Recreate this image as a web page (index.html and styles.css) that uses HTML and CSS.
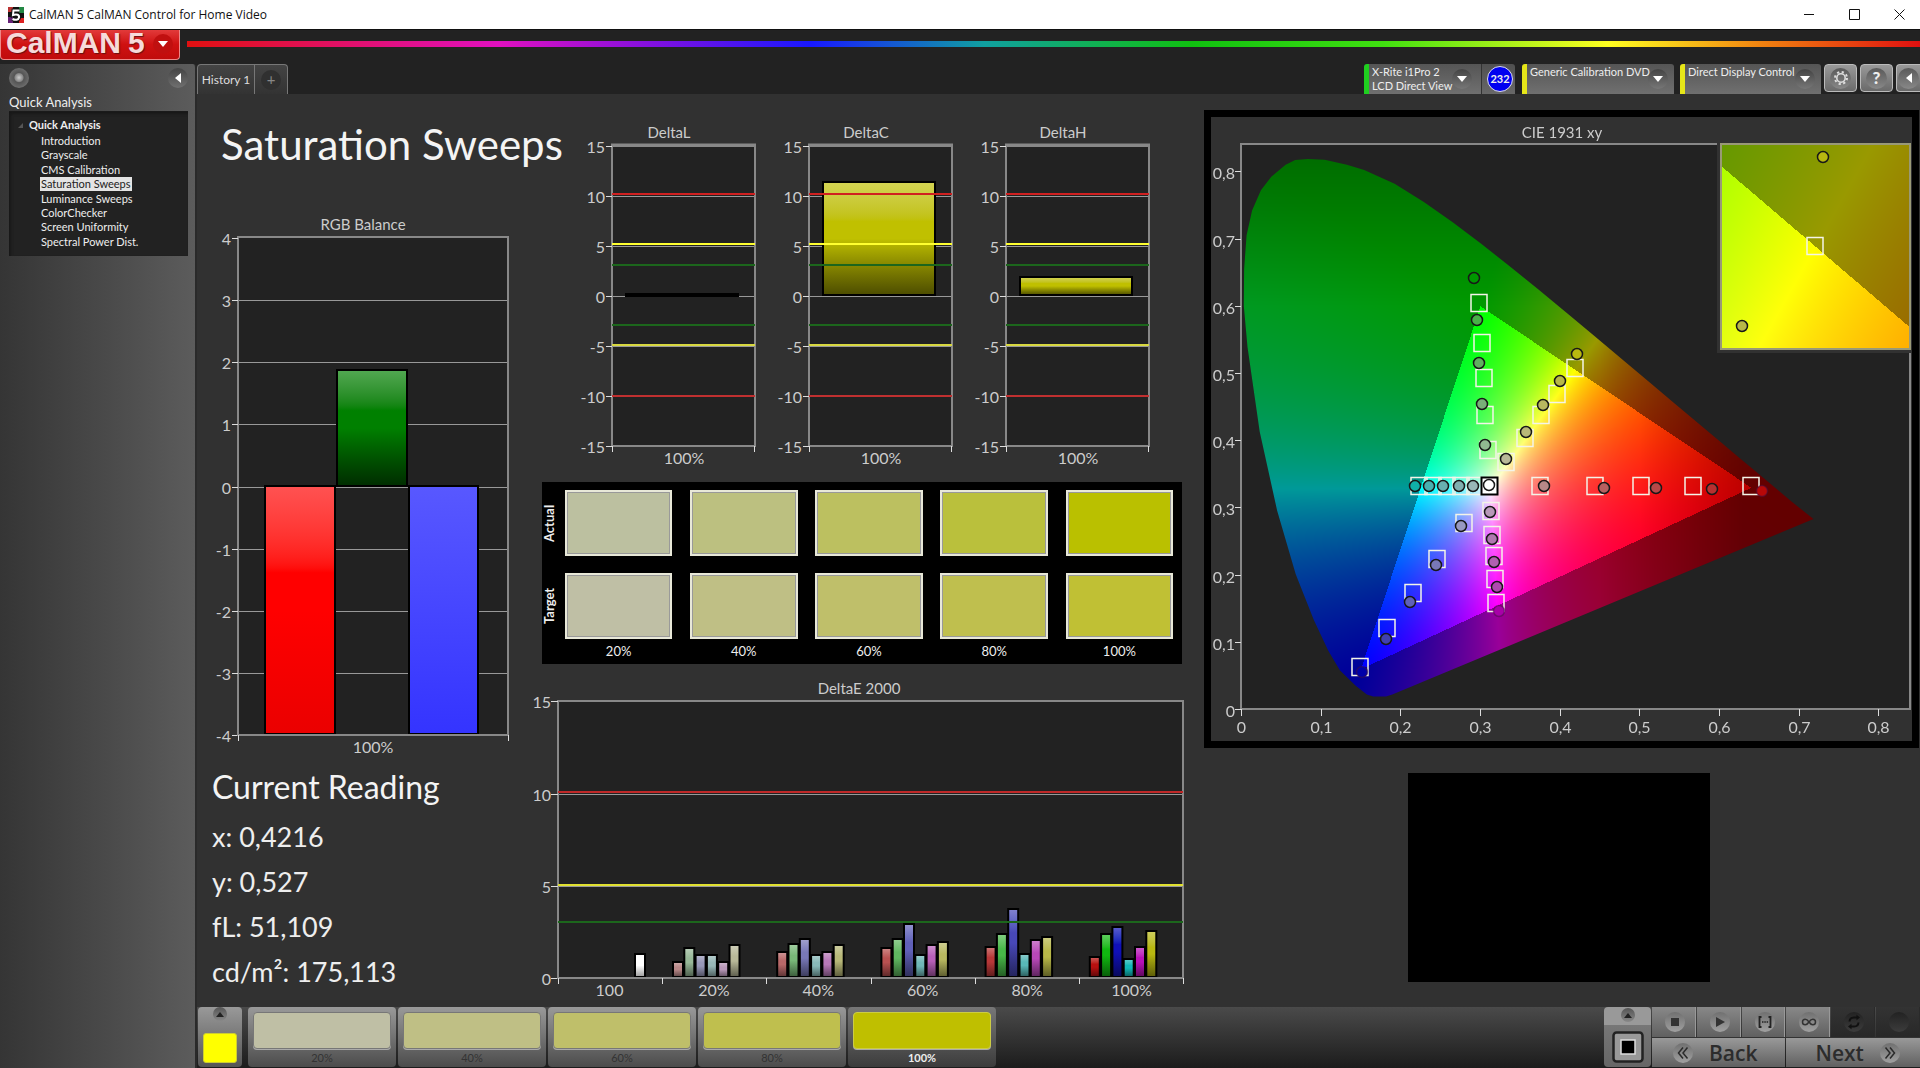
FILE: index.html
```html
<!DOCTYPE html>
<html lang="en">
<head>
<meta charset="utf-8">
<title>CalMAN 5 CalMAN Control for Home Video</title>
<link rel="stylesheet" href="styles.css">
</head>
<body>
<header class="titlebar">
  <svg class="app-icon" viewBox="0 0 16 16" aria-hidden="true">
    <rect width="16" height="16" fill="#111"/>
    <path d="M0 0h5v5H0z" fill="#b33"/><path d="M11 0h5v6h-5z" fill="#284"/><path d="M0 10h5v6H0z" fill="#627"/><path d="M11 11h5v5h-5z" fill="#d22"/>
    <path d="M11.5 3.5h-6l-.5 4.500c4-1.500 6.500 0 6 2.500s-3.500 3-6.500 1.500" fill="none" stroke="#111" stroke-width="4"/>
    <path d="M11.500 3.500h-6l-.5 4.500c4-1.500 6.500 0 6 2.500s-3.500 3-6.500 1.500" fill="none" stroke="#fff" stroke-width="2"/>
  </svg>
  <span class="window-title">CalMAN 5 CalMAN Control for Home Video</span>
  <div class="window-controls">
    <button type="button" aria-label="Minimize"><svg viewBox="0 0 11 11"><path d="M0 5.500h10"/></svg></button>
    <button type="button" aria-label="Maximize"><svg viewBox="0 0 11 11"><path d="M.5.5h10v10H.5z"/></svg></button>
    <button type="button" aria-label="Close"><svg viewBox="0 0 11 11"><path d="M.5.5l10 10M10.500.5l-10 10"/></svg></button>
  </div>
</header>

<div class="brandbar">
  <button type="button" class="brand"><span class="brand-name">CalMAN</span><span class="brand-name">5</span>
    <span class="brand-knob"><svg viewBox="0 0 10 6" width="10" height="6"><path d="M0 0h10L5 6z" fill="#fff"/></svg></span></button>
  <div class="spectrum"></div>
</div>

<div class="workspace">
  <aside class="sidebar">
    <div class="sidebar-tools">
      <button type="button" class="orb" aria-label="Pin"></button>
      <button type="button" class="collapse" aria-label="Collapse"><svg viewBox="0 0 6 10" width="6" height="10"><path d="M6 0v10L0 5z" fill="#fff"/></svg></button>
    </div>
    <h2 class="sidebar-title">Quick Analysis</h2>
    <nav class="tree">
      <div class="tree-root"><svg viewBox="0 0 5 5" width="5" height="5"><path d="M5 0v5H0z" fill="#555"/></svg>Quick Analysis</div>
      <ul>
        <li><a href="#introduction">Introduction</a></li>
        <li><a href="#grayscale">Grayscale</a></li>
        <li><a href="#cms">CMS Calibration</a></li>
        <li><a href="#saturation" class="selected">Saturation Sweeps</a></li>
        <li><a href="#luminance">Luminance Sweeps</a></li>
        <li><a href="#colorchecker">ColorChecker</a></li>
        <li><a href="#uniformity">Screen Uniformity</a></li>
        <li><a href="#spectral">Spectral Power Dist.</a></li>
      </ul>
    </nav>
  </aside>

  <div class="stage">
    <div class="tabbar">
      <button type="button" class="tab tab-history">History 1</button>
      <button type="button" class="tab tab-add" aria-label="Add history"><span>+</span></button>
      <div class="devices">
        <button type="button" class="device device-meter"><span>X-Rite i1Pro 2<br>LCD Direct View</span><i class="knob"></i></button>
        <div class="reading-count"><span>232</span></div>
        <button type="button" class="device device-source"><span>Generic Calibration DVD</span><i class="knob"></i></button>
        <button type="button" class="device device-display"><span>Direct Display Control</span><i class="knob"></i></button>
        <button type="button" class="tool" aria-label="Settings"><span><svg viewBox="0 0 14 14" width="14" height="14"><circle cx="7" cy="7" r="4.200" fill="none" stroke="#ddd" stroke-width="1.600"/><circle cx="7" cy="7" r="6" fill="none" stroke="#ddd" stroke-width="2" stroke-dasharray="2.200 2.510"/></svg></span></button>
        <button type="button" class="tool" aria-label="Help"><span>?</span></button>
        <button type="button" class="tool tool-cut" aria-label="Collapse toolbar"><span><svg viewBox="0 0 6 10" width="6" height="10"><path d="M6 0v10L0 5z" fill="#fff"/></svg></span></button>
      </div>
    </div>

    <main class="board">
      <section class="col-left">
        <h1>Saturation Sweeps</h1>
        <svg id="rgb" class="chart" viewBox="197 210 333 552"></svg>
        <h2>Current Reading</h2>
        <dl class="readings">
          <div><dt>x:</dt> <dd>0,4216</dd></div>
          <div><dt>y:</dt> <dd>0,527</dd></div>
          <div><dt>fL:</dt> <dd>51,109</dd></div>
          <div><dt>cd/m²:</dt> <dd>175,113</dd></div>
        </dl>
      </section>
      <section class="col-mid">
        <svg id="deltas" class="chart" viewBox="530 116 670 358"></svg>
        <div class="swatches">
          <span class="row-name">Actual</span>
          <div class="sw a1"></div><div class="sw a2"></div><div class="sw a3"></div><div class="sw a4"></div><div class="sw a5"></div>
          <span class="row-name">Target</span>
          <div class="sw t1"></div><div class="sw t2"></div><div class="sw t3"></div><div class="sw t4"></div><div class="sw t5"></div>
          <span></span><span>20%</span><span>40%</span><span>60%</span><span>80%</span><span>100%</span>
        </div>
        <svg id="deltae" class="chart" viewBox="530 674 670 330"></svg>
      </section>
      <section class="col-right">
        <div class="cie">
          <canvas id="cie-colors" width="701" height="624"></canvas>
          <svg id="cie" viewBox="1211 117 701 624"></svg>
        </div>
        <div class="patch"></div>
      </section>
    </main>

    <footer class="dock">
      <button type="button" class="current" aria-label="Current color"><i class="up"></i><span></span></button>
      <div class="levels">
        <button type="button" class="level"><i class="t1"></i>20%</button>
        <button type="button" class="level"><i class="t2"></i>40%</button>
        <button type="button" class="level"><i class="t3"></i>60%</button>
        <button type="button" class="level"><i class="t4"></i>80%</button>
        <button type="button" class="level active"><i class="full"></i>100%</button>
      </div>
      <div class="transport">
        <button type="button" class="window-size" aria-label="Pattern window"><i class="up"></i>
          <svg viewBox="0 0 32 32" width="32" height="32"><rect x="1.500" y="1.500" width="29" height="29" rx="3" fill="#999" stroke="#222" stroke-width="2.500"/><path d="M9 9h14v14H9z" fill="#000" stroke="#ddd" stroke-width="1.500"/></svg></button>
        <div class="keys">
          <button type="button" class="key" aria-label="Stop"><span><svg viewBox="0 0 16 16"><path d="M4 4h8v8H4z" fill="#333"/></svg></span></button>
          <button type="button" class="key" aria-label="Play"><span><svg viewBox="0 0 16 16"><path d="M4 3l9 5-9 5z" fill="#333"/></svg></span></button>
          <button type="button" class="key" aria-label="Read series"><span><svg viewBox="0 0 16 16"><path d="M4.500 3H2.500v10h2M11.500 3h2v10h-2" fill="none" stroke="#222" stroke-width="1.800"/><path d="M5 7.200h1.500v1.600H5zM7.300 7.200h1.500v1.600H7.300zM9.600 7.200h1.500v1.600H9.600z" fill="#222"/></svg></span></button>
          <button type="button" class="key" aria-label="Read continuously"><span><svg viewBox="0 0 16 16"><path d="M8 8C6.500 5.800 5.500 5.200 4.200 5.200 2.600 5.200 1.500 6.400 1.500 8s1.100 2.800 2.700 2.800C5.500 10.800 6.500 10.200 8 8s2.500-2.800 3.800-2.800c1.600 0 2.700 1.200 2.700 2.800s-1.100 2.800-2.700 2.800C10.500 10.800 9.500 10.200 8 8z" fill="none" stroke="#333" stroke-width="1.500"/></svg></span></button>
          <button type="button" class="key off" aria-label="Refresh"><span><svg viewBox="0 0 16 16"><path d="M3.500 7.500C3.700 5 5.500 3.500 8 3.500h3M12.500 8.500c-.2 2.500-2 4-4.500 4H5" fill="none" stroke="#111" stroke-width="2"/><path d="M10.500.8l3.500 2.700-3.500 2.700zM5.500 15.200L2 12.500l3.500-2.700z" fill="#111"/></svg></span></button>
          <button type="button" class="key off" aria-label="Record"><span></span></button>
          <button type="button" class="step"><span><svg viewBox="0 0 16 16"><path d="M8 2.500L3.500 8 8 13.500M12.500 2.500L8 8l4.500 5.500" fill="none" stroke="#2a2a2a" stroke-width="1.500"/></svg></span>Back</button>
          <button type="button" class="step step-next">Next<span><svg viewBox="0 0 16 16"><path d="M3.500 2.500L8 8l-4.500 5.500M8 2.500L12.500 8 8 13.500" fill="none" stroke="#2a2a2a" stroke-width="1.500"/></svg></span></button>
        </div>
      </div>
    </footer>
  </div>
</div>
<script src="charts.js"></script>
</body>
</html>
```
FILE: styles.css
```css
* { box-sizing: border-box; }
body {
  margin: 0; min-height: 100vh; display: flex; flex-direction: column;
  background: #222; color: #eee; font-family: Lato, "Open Sans", sans-serif; font-size: 13px;
}
button { font: inherit; color: inherit; border: 0; margin: 0; padding: 0; background: none; }
h1, h2, ul, dl, dd { margin: 0; padding: 0; font-weight: 400; }

.titlebar { height: 29px; background: #fff; display: flex; align-items: center; gap: 5px; padding: 0 4px 0 8px; color: #111; }
.app-icon { width: 16px; height: 16px; }
.window-title { font: 12px/20px "Open Sans", sans-serif; }
.window-controls { margin-left: auto; display: flex; }
.window-controls button { width: 45px; height: 28px; display: grid; place-items: center; }
.window-controls button:last-child { width: 34px; margin-left: 5px; }
.window-controls svg { width: 11px; height: 11px; fill: none; stroke: #111; }

.brandbar { height: 35px; display: flex; gap: 7px; border-top: 1px solid #111; }
.brand {
  width: 180px; height: 30px; display: flex; align-items: flex-start; gap: 7px; padding-left: 5px;
  background: linear-gradient(#e23a3a, #cf1111 50%, #c00c0c); border: 1px solid #e88; border-top: 0; border-radius: 0 0 4px 4px;
}
.brand-name { font: bold 30px/25px "Liberation Sans", sans-serif; color: #f6dada; text-shadow: 1px 1px 1px #611; }
.brand-knob { width: 20px; height: 20px; margin: 4px 6px 0 auto; border-radius: 50%; background: #c01010; display: grid; place-items: center; }
.spectrum {
  flex: 1; height: 6px; margin-top: 11px;
  background: linear-gradient(90deg, #e01010, #e010c0 18%, #8010e0 27%, #1818ff 36%, #10a0a0 46%, #10c010 58%, #40e010 69%, #ffff20 82%, #f08010 91%, #e01010);
}

.workspace { flex: 1; display: flex; }
.sidebar {
  width: 197px; padding: 4px 7px 0 9px; border-right: 2px solid #2a2a2a; border-radius: 0 4px 0 0;
  background: linear-gradient(90deg, #353535, #484848 50%, #5c5c5c);
}
.sidebar-tools { display: flex; justify-content: space-between; height: 20px; }
.orb { width: 20px; height: 20px; border-radius: 50%; background: radial-gradient(circle at 50% 48%, #ccc 0, #999 3px, #888 4px, #555 5px, #6c6c6c 10px); }
.collapse { width: 20px; height: 20px; border-radius: 50%; background: linear-gradient(#444, #707070); display: grid; place-items: center; }
.sidebar-title { font-size: 13px; line-height: 18px; padding-top: 5px; }
.tree { background: #222; height: 145px; border-top: 1px solid #1a1a1a; box-shadow: inset 2px 2px 3px #181818; padding-top: 4px; }
.tree-root { display: flex; align-items: center; gap: 6px; padding-left: 9px; font-weight: 700; font-size: 11px; line-height: 18px; }
.tree ul { list-style: none; padding-left: 31px; height: 115px; display: grid; }
.tree a { display: block; width: fit-content; color: #eee; text-decoration: none; font-size: 11px; line-height: 14px; padding: 0 1px; }
.tree .selected { background: #e4e4e4; color: #222; }

.stage { flex: 1; min-width: 0; display: flex; flex-direction: column; }
.tabbar { height: 30px; display: flex; }
.tab { background: linear-gradient(#444, #333); border: 1px solid #777; border-bottom: 0; }
.tab-history { width: 58px; border-radius: 4px 0 0 0; color: #ddd; font-size: 12px; }
.tab-add { width: 33px; border-left: 0; border-radius: 0 4px 0 0; display: grid; place-items: center; }
.tab-add span { width: 20px; height: 20px; line-height: 19px; border-radius: 50%; background: #303030; color: #888; font-size: 15px; }
.devices { margin-left: auto; display: flex; align-items: flex-start; overflow: hidden; }
.device {
  height: 30px; display: flex; justify-content: space-between; align-items: flex-start; text-align: left;
  font-size: 11px; line-height: 14px; padding: 1px 6px 0 3px; white-space: nowrap;
  background: linear-gradient(#555, #707070); border-left: 5px solid #e6e619; border-radius: 3px 3px 0 0;
}
.device-meter { width: 117px; border-left-color: #1fcf1f; border-radius: 3px 0 0 0; padding-right: 9px; }
.device-source { width: 152px; margin-left: 7px; }
.device-display { width: 141px; margin-left: 6px; }
.knob { width: 20px; height: 20px; margin-top: 4px; margin-left: -6px; border-radius: 50%; background: linear-gradient(#444, #777); display: grid; place-items: center; flex: none; }
.knob::after { content: ""; border: 5px solid transparent; border-top: 6px solid #fff; border-bottom: 0; }
.reading-count { width: 34px; height: 30px; padding-left: 3px; border-left: 1px solid #333; background: linear-gradient(#505050, #686868); border-radius: 0 3px 0 0; display: grid; place-items: center; }
.reading-count span { width: 26px; height: 26px; line-height: 23px; border: 1px solid #dde; border-radius: 50%; background: #0000f0; text-align: center; font-size: 11px; font-weight: 700; }
.tool {
  width: 33px; height: 28px; margin-left: 3px; border: 1px solid #bbb; border-radius: 4px;
  background: linear-gradient(#999, #6a6a6a); display: grid; place-items: center; flex: none;
}
.tool span { width: 21px; height: 21px; border-radius: 50%; background: linear-gradient(#5a5a5a, #888); display: grid; place-items: center; font-size: 17px; font-weight: 900; line-height: 20px; }
.tool-cut { width: 24px; border-right: 0; border-radius: 4px 0 0 4px; }

.board { flex: 1; display: grid; grid-template-columns: minmax(0, 333fr) minmax(0, 670fr) minmax(0, 720fr); background: #313131; }
.chart { display: block; width: 100%; }
svg text { font-family: Lato, "Open Sans", sans-serif; font-size: 16px; fill: #ccc; }
svg .caption { font-size: 15px; }
.col-left { padding-top: 22px; }
.col-left h1 { font-size: 42px; line-height: 56px; padding-left: 24px; margin-bottom: 38px; white-space: nowrap; color: #f4f4f4; }
.col-left h2 { font-size: 32px; line-height: 46px; padding-left: 15px; margin: 2px 0 4px; color: #f4f4f4; }
.readings { padding-left: 15px; font-size: 27px; line-height: 45px; }
.readings dt, .readings dd { display: inline; }
.col-mid { padding-top: 22px; }
.swatches {
  margin: 8px 18px 10px 12px; height: 182px; padding: 8px 0 0; background: #000; display: grid;
  grid-template-columns: 14px repeat(5, 1fr); grid-template-rows: 66px 66px 24px; row-gap: 17px;
  text-align: center; font-size: 13px; line-height: 14px; justify-items: center;
}
.sw { width: 86%; border: 2px solid #e8e8d8; outline: 1px solid #999; outline-offset: -3px; }
.swatches > span:nth-last-child(-n+6) { margin-top: -17px; line-height: 24px; }
.row-name { writing-mode: vertical-rl; transform: rotate(180deg); width: 16px; line-height: 16px; font-weight: 700; }
.a1 { background: #bcc0a0; } .a2 { background: #bcc080; } .a3 { background: #bcc060; } .a4 { background: #bac03c; } .a5 { background: #bac000; }
.t1 { background: #bfbfa5; } .t2 { background: #bfbf85; } .t3 { background: #bfbf6a; } .t4 { background: #bfbf4e; } .t5 { background: #c0c034; } .full { background: #bfbf00; }
.col-right { padding: 16px 1px 0 4px; }
.cie { position: relative; border: 7px solid #000; }
.cie canvas { display: block; width: 100%; }
.cie svg { position: absolute; inset: 0; width: 100%; height: 100%; }
.patch { width: 302px; height: 209px; margin: 25px auto 0 204px; background: #000; }

.dock { height: 61px; display: flex; padding-left: 1px; background: linear-gradient(#4a4a4a, #1c1c1c); }
.current { width: 44px; height: 60px; border-radius: 4px; background: linear-gradient(#999, #555); display: flex; flex-direction: column; align-items: center; justify-content: space-between; padding-bottom: 4px; }
.current span { width: 34px; height: 30px; border-radius: 3px; background: #ff0; border: 1px solid #cc3; }
.up { width: 14px; height: 14px; border-radius: 50%; background: linear-gradient(#555, #888); display: grid; place-items: center; }
.up::after { content: ""; border: 4px solid transparent; border-bottom: 5px solid #222; border-top: 0; }
.levels { display: flex; gap: 2px; margin-left: 6px; }
.level { width: 148px; height: 60px; padding: 5px; border-radius: 4px; background: linear-gradient(#999, #4c4c4c); color: #333; font-size: 11px; line-height: 18px; }
.level i { display: block; height: 37px; border: 1px solid #777; border-radius: 4px; box-shadow: 0 1px 0 #aaa; }
.level.active { background: linear-gradient(#777, #3c3c3c); color: #eee; font-weight: 700; }
.level.active i { border-color: #cc4; }
.transport { margin-left: auto; display: flex; gap: 1px; }
.window-size { width: 47px; height: 60px; border-radius: 4px; background: linear-gradient(#999 30%, #777 30%, #666); display: flex; flex-direction: column; align-items: center; justify-content: space-between; padding: 1px 0 4px; }
.keys { width: 268px; display: grid; grid-template-columns: repeat(6, 1fr); grid-template-rows: 30px 29px; gap: 1px; }
.key { padding-left: 3px; background: linear-gradient(#888, #606060); border-right: 1px solid #999; display: grid; place-items: center; }
.key span, .step span { width: 20px; height: 20px; border-radius: 50%; background: linear-gradient(#707070, #a0a0a0); display: grid; place-items: center; flex: none; }
.key svg, .step svg { width: 16px; height: 16px; }
.key.off { background: linear-gradient(#333, #282828); border-color: #2a2a2a; }
.key.off span { background: linear-gradient(#222, #3c3c3c); }
.step { grid-column: span 3; background: linear-gradient(#999, #606060); display: flex; align-items: center; gap: 16px; padding-left: 21px; font: 600 21px/28px "Open Sans", sans-serif; color: #2c2c2c; }
.step-next { padding-left: 29px; }
```
FILE: charts.js
```js
const NS = 'http://www.w3.org/2000/svg';

function add(svg, name, attrs, text) {
  const el = document.createElementNS(NS, name);
  for (const key in attrs) el.setAttribute(key, attrs[key]);
  if (text !== undefined) el.textContent = text;
  svg.appendChild(el);
  return el;
}
function line(svg, x1, y1, x2, y2, color, width = 1) {
  add(svg, 'line', { x1, y1, x2, y2, stroke: color, 'stroke-width': width });
}
function label(svg, x, y, text, anchor = 'middle') {
  add(svg, 'text', { x, y, 'text-anchor': anchor }, text);
}
function caption(svg, x, y, text) {
  add(svg, 'text', { x, y, 'text-anchor': 'middle', class: 'caption' }, text);
}

// Vertical gradient running from a light top through the plain colour to a dark foot.
let gradients = 0;
function shade(svg, color, foot) {
  const id = 'shade' + gradients++;
  const g = add(svg, 'linearGradient', { id, x1: 0, y1: 0, x2: 0, y2: 1 });
  const mix = (c, p, other) => `color-mix(in srgb, ${c} ${p}%, ${other})`;
  [[0, mix(color, 68, 'white')], [0.35, color], [0.5, color], [1, mix(color, foot, 'black')]].forEach(([offset, c]) => {
    add(g, 'stop', { offset, style: `stop-color:${c}` });
  });
  return `url(#${id})`;
}
function bar(svg, x, y, width, height, color, foot = 35) {
  add(svg, 'rect', { x, y, width, height, fill: shade(svg, color, foot), stroke: '#000', 'stroke-width': 2 });
}
function frame(svg, x, y, x2, y2) {
  add(svg, 'rect', { x, y, width: x2 - x, height: y2 - y, fill: '#222', stroke: '#888', 'stroke-width': 2 });
}

function rgbBalance() {
  const svg = document.getElementById('rgb');
  caption(svg, 363, 230, 'RGB Balance');
  frame(svg, 238, 237, 508, 735);
  for (let v = 4; v >= -4; v--) {
    const y = Math.round(486.500 - v * 62.200) + 0.5;
    line(svg, 232, y, 238, y, '#ddd');
    if (Math.abs(v) < 4) line(svg, 239, y, 507, y, '#999');
    label(svg, 231, y + 6, v, 'end');
  }
  bar(svg, 265, 486, 70, 248, '#f00', 92);
  bar(svg, 337, 370, 70, 116, '#008000', 35);
  add(svg, 'rect', { x: 409, y: 486, width: 69, height: 248, fill: 'url(#blue)', stroke: '#000', 'stroke-width': 2 });
  const g = add(svg, 'linearGradient', { id: 'blue', x1: 0, y1: 0, x2: 0, y2: 1 });
  add(g, 'stop', { offset: 0, 'stop-color': '#5858ff' });
  add(g, 'stop', { offset: 1, 'stop-color': '#3434ff' });
  line(svg, 237, 735, 509, 735, '#888', 2);
  line(svg, 238.500, 735, 238.500, 741, '#ddd');
  line(svg, 508.500, 735, 508.500, 741, '#ddd');
  label(svg, 373, 753, '100%');
}

function deltas() {
  const svg = document.getElementById('deltas');
  [['DeltaL', 612, 294, 296], ['DeltaC', 809, 182, 295], ['DeltaH', 1006, 277, 295]].forEach(([name, x, top, foot]) => {
    caption(svg, x + 57, 138, name);
    frame(svg, x, 146, x + 143, 446);
    line(svg, x - 1, 145, x + 144, 145, '#888', 3);
    for (let v = 15; v >= -15; v -= 5) {
      const y = Math.round(296 - v * 10) + 0.5;
      line(svg, x - 6, y, x, y, '#ddd', 1);
      if (Math.abs(v) < 15) line(svg, x + 1, y, x + 142, y, '#999');
      label(svg, x - 7, y + 6, v, 'end');
    }
    bar(svg, x + 14, top, 112, foot - top, name === 'DeltaL' ? '#000' : '#c0c000', 40);
    [[194, '#d02020'], [244, '#ffff30'], [265, '#1c661c'], [325, '#1c661c'], [345, '#d8d840'], [396, '#c03030']]
      .forEach(([y, color]) => line(svg, x, y, x + 143, y, color, 2));
    line(svg, x + 0.5, 446, x + 0.5, 452, '#ddd');
    line(svg, x + 142.500, 446, x + 142.500, 452, '#ddd');
    label(svg, x + 72, 464, '100%');
  });
}

function deltaE() {
  const svg = document.getElementById('deltae');
  caption(svg, 859, 694, 'DeltaE 2000');
  frame(svg, 558, 701, 1183, 978);
  [[15, 701.500], [10, 794.500], [5, 886.500], [0, 978.500]].forEach(([v, y]) => {
    line(svg, 551, y, 558, y, '#ddd');
    if (v % 15) line(svg, 559, y, 1182, y, '#999');
    label(svg, 551, y + 6, v, 'end');
  });
  const colors = [
    ['#b88888', '#98b898', '#9898b8', '#98b8b8', '#b898b8', '#b8b898'],
    ['#b86868', '#78b878', '#7878b8', '#88b8b8', '#b878b8', '#b8b878'],
    ['#b85050', '#60b860', '#6060b8', '#70b8b8', '#b860b8', '#b8b860'],
    ['#b83838', '#48b848', '#4848b8', '#58b8b8', '#b848b8', '#b8b848'],
    ['#b81010', '#10b810', '#1010b8', '#10b8b8', '#b810b8', '#b8b810']
  ];
  const tops = [
    [962, 948, 955, 955, 962, 945],
    [952, 944, 939, 955, 952, 945],
    [948, 939, 924, 955, 945, 942],
    [947, 934, 909, 954, 940, 937],
    [957, 934, 927, 959, 947, 931]
  ];
  bar(svg, 635, 954, 10, 23, '#fff', 60);
  tops.forEach((row, i) => row.forEach((top, j) => {
    bar(svg, 673 + i * 104.200 + j * 11.300, top, 10, 977 - top, colors[i][j], 50);
  }));
  line(svg, 558, 792, 1183, 792, '#c02828', 2);
  line(svg, 558, 885, 1183, 885, '#e0e030', 2);
  line(svg, 558, 922, 1183, 922, '#1c661c', 2);
  line(svg, 557, 978, 1184, 978, '#888', 2);
  ['100', '20%', '40%', '60%', '80%', '100%'].forEach((t, i) => label(svg, 609.500 + i * 104.400, 996, t));
  for (let i = 0; i < 7; i++) {
    const x = Math.round(558 + i * 104.200) + 0.5;
    line(svg, x, 978, x, 984, '#ddd');
  }
}

const toX = v => 1241 + v * 796.500;
const toY = v => 709 - v * 672;
const locus = [
  [0.166, 0.0185], [0.158, 0.0215], [0.144, 0.0345], [0.1241, 0.0578], [0.1096, 0.0868], [0.0913, 0.1327], [0.0687, 0.2007],
  [0.0454, 0.295], [0.0235, 0.4127], [0.0082, 0.5384], [0.0035, 0.6], [0.0039, 0.6548], [0.007, 0.705], [0.0139, 0.742],
  [0.025, 0.772], [0.038, 0.792], [0.056, 0.81], [0.068, 0.817], [0.084, 0.8185], [0.105, 0.8175], [0.133, 0.81],
  [0.1547, 0.802], [0.1929, 0.7816], [0.2296, 0.7543], [0.2658, 0.7243], [0.3016, 0.6923], [0.3373, 0.6589], [0.3731, 0.6245],
  [0.4087, 0.5896], [0.4441, 0.5547], [0.4788, 0.5202], [0.5125, 0.4866], [0.5448, 0.4544], [0.5752, 0.4242], [0.6029, 0.3965],
  [0.627, 0.3725], [0.6482, 0.3514], [0.6658, 0.334], [0.6915, 0.3083], [0.7187, 0.2827], [0.19, 0.0215], [0.182, 0.0185]
];

// Brightest displayable colour at a chromaticity, dimmed outside the Rec. 709 triangle.
function colorAt(x, y) {
  const X = x / y, Z = (1 - x - y) / y;
  let rgb = [
    3.2406 * X - 1.5372 - 0.4986 * Z,
    -0.9689 * X + 1.8758 + 0.0415 * Z,
    0.0557 * X - 0.204 + 1.057 * Z
  ];
  const inside = Math.min(...rgb) >= 0;
  rgb = rgb.map(c => Math.max(0, c));
  const max = Math.max(...rgb);
  let level = inside ? 255 : 153;
  if (!inside) {
    if (y > 0.6) level -= (y - 0.6) * 200;
    if (x > 0.45) level -= Math.min(54, (x - 0.45) * 300);
  } else if (x > 0.5) {
    level -= (x - 0.5) * 500;
  }
  return rgb.map(c => Math.pow(c / max, 1.15) * level);
}

function paint(ctx, left, top, width, height, xOf, yOf) {
  const img = ctx.createImageData(width, height);
  for (let j = 0; j < height; j++) {
    for (let i = 0; i < width; i++) {
      const c = colorAt(xOf(left + i), Math.max(0.001, yOf(top + j)));
      img.data.set([c[0], c[1], c[2], 255], (j * width + i) * 4);
    }
  }
  const buffer = document.createElement('canvas');
  buffer.width = width;
  buffer.height = height;
  buffer.getContext('2d').putImageData(img, 0, 0);
  ctx.drawImage(buffer, left, top);
}

function cie() {
  const ctx = document.getElementById('cie-colors').getContext('2d');
  ctx.fillStyle = '#313131';
  ctx.fillRect(0, 0, 701, 624);
  ctx.translate(-1211, -117);
  ctx.fillStyle = '#222';
  ctx.fillRect(1241, 144, 669, 565);
  ctx.save();
  ctx.beginPath();
  locus.forEach(([x, y]) => ctx.lineTo(toX(x), toY(y)));
  ctx.closePath();
  ctx.clip();
  paint(ctx, 1241, 144, 669, 565, x => (x - 1241) / 796.500, y => (709 - y) / 672);
  ctx.restore();
  ctx.fillStyle = '#313131';
  ctx.fillRect(1717, 143, 195, 210);
  paint(ctx, 1721, 144, 189, 205, x => 0.4193 + (x - 1815) / (796.500 * 4.900), y => 0.5053 - (y - 246) / (672 * 6.250));

  const svg = document.getElementById('cie');
  caption(svg, 1562, 138, 'CIE 1931 xy');
  line(svg, 1240, 144, 1717, 144, '#888', 2);
  line(svg, 1241, 144, 1241, 710, '#888', 2);
  line(svg, 1240, 709, 1911, 709, '#888', 2);
  line(svg, 1910, 353, 1910, 709, '#888', 2);
  add(svg, 'rect', { x: 1721, y: 144, width: 189, height: 205, fill: 'none', stroke: '#999977', 'stroke-width': 2 });
  for (let i = 0; i <= 8; i++) {
    const text = i ? '0,' + i : '0';
    const x = Math.round(toX(i / 10)) + 0.5, y = Math.round(toY(i / 10)) + 0.5;
    line(svg, x, 709, x, 716, '#ddd');
    label(svg, x, 733, text);
    line(svg, 1235, y, 1241, y, '#ddd');
    label(svg, 1235, y + 7, text, 'end');
  }
  const squares = [
    [1479, 303], [1482, 343], [1484, 378], [1485, 415], [1488, 450], [1575, 368], [1557, 394], [1541, 415], [1525, 438], [1506, 462],
    [1419, 486], [1433, 486], [1447, 486], [1461, 486], [1475, 486], [1540, 486], [1595, 486], [1641, 486], [1693, 486], [1751, 486],
    [1491, 511], [1492, 535], [1494, 556], [1495, 579], [1496, 603], [1464, 523], [1437, 559], [1413, 593], [1387, 628], [1360, 667],
    [1815, 246]
  ];
  squares.forEach(([x, y]) => add(svg, 'rect', { x: x - 8, y: y - 8.500, width: 16, height: 17, fill: 'none', stroke: '#f4f4e8', 'stroke-width': 1.500 }));
  add(svg, 'rect', { x: 1481.500, y: 477.500, width: 16, height: 17, fill: '#fff', stroke: '#000', 'stroke-width': 2 });
  const dots = [
    [1474, 278, '#009800'], [1477, 320, '#48b048'], [1479, 363, '#60b060'], [1482, 404, '#78b078'], [1485, 445, '#90b890'],
    [1577, 354, '#b8b810'], [1560, 381, '#b8b848'], [1543, 405, '#b8b860'], [1526, 432, '#b8b878'], [1506, 459, '#b8b898'],
    [1415, 486, '#10b0a8'], [1429, 486, '#48b0b0'], [1443, 486, '#68b0b0'], [1459, 486, '#80b0b0'], [1473, 486, '#98b8b8'],
    [1489, 485, '#ffffff'], [1544, 486, '#b88888'], [1604, 488, '#b86060'], [1656, 488, '#b84848'], [1712, 489, '#b83030'], [1762, 491, '#b80808'],
    [1490, 512, '#b898b8'], [1492, 539, '#b078b0'], [1494, 562, '#b060b0'], [1497, 587, '#b048b0'], [1499, 611, '#a800a8'],
    [1461, 526, '#9898c0'], [1436, 565, '#7878b8'], [1410, 602, '#6060b8'], [1386, 639, '#4040b0'], [1362, 672, '#0000a8'],
    [1823, 157, '#b8b810'], [1742, 326, '#b8b848']
  ];
  dots.forEach(([x, y, color], i) => add(svg, 'circle', { cx: x, cy: y, r: 5.500, fill: color, stroke: [20, 25, 30].includes(i) ? '#40104080' : '#181818', 'stroke-width': 1.500 }));
}

rgbBalance();
deltas();
deltaE();
cie();
```
